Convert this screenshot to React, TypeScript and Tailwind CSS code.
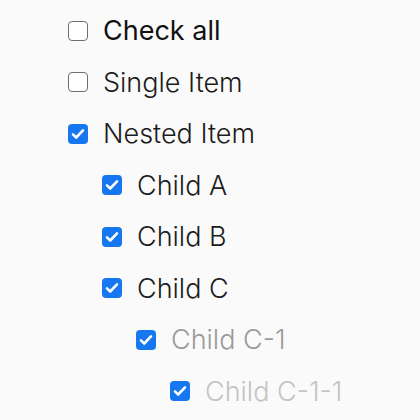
import { useState } from 'react';

type Item = { id: string; label: string; level: number; tone: string; bold?: boolean };

const items: Item[] = [
  { id: 'all', label: 'Check all', level: 0, tone: 'text-[#111111]', bold: true },
  { id: 'single', label: 'Single Item', level: 0, tone: 'text-[#1c1c1c]' },
  { id: 'nested', label: 'Nested Item', level: 0, tone: 'text-[#1c1c1c]' },
  { id: 'a', label: 'Child A', level: 1, tone: 'text-[#1c1c1c]' },
  { id: 'b', label: 'Child B', level: 1, tone: 'text-[#1c1c1c]' },
  { id: 'c', label: 'Child C', level: 1, tone: 'text-[#1c1c1c]' },
  { id: 'c1', label: 'Child C-1', level: 2, tone: 'text-[#9a9a9a]' },
  { id: 'c11', label: 'Child C-1-1', level: 3, tone: 'text-[#c4c4c4]' },
];

const indent = ['pl-0', 'pl-[34px]', 'pl-[68px]', 'pl-[102px]'];

const Box = ({ checked }: { checked: boolean }) =>
  checked ? (
    <span className="flex h-5 w-5 shrink-0 items-center justify-center rounded-[4px] bg-[#1677f0]">
      <svg className="h-4 w-4" viewBox="0 0 16 16" fill="none">
        <path d="M3 8.4l3.2 3.1L13 4.4" stroke="white" strokeWidth={2.6} strokeLinecap="round" strokeLinejoin="round" />
      </svg>
    </span>
  ) : (
    <span className="h-5 w-5 shrink-0 rounded-[4px] border-[1.5px] border-[#6e6e6e] bg-white" />
  );

export default function App() {
  const [checked, setChecked] = useState<Record<string, boolean>>({
    all: false,
    single: false,
    nested: true,
    a: true,
    b: true,
    c: true,
    c1: true,
    c11: true,
  });

  return (
    <div className="h-[420px] w-[420px] overflow-hidden bg-[#fafafa] pl-[68px] pt-[5px]" style={{ fontFamily: 'Inter, sans-serif' }}>
      {items.map((it) => (
        <div
          key={it.id}
          className={`flex h-[51.5px] cursor-pointer items-center gap-[15px] ${indent[it.level]}`}
          onClick={() => setChecked({ ...checked, [it.id]: !checked[it.id] })}
        >
          <Box checked={checked[it.id]} />
          <span className={`text-[27px] leading-none ${it.bold ? 'font-normal' : 'font-light'} ${it.tone}`}>{it.label}</span>
        </div>
      ))}
    </div>
  );
}
